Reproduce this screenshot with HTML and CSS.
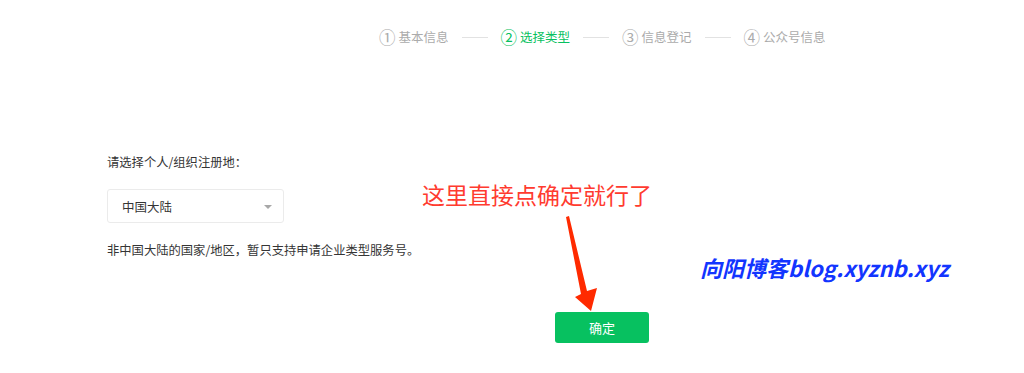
FILE: index.html
```html
<!DOCTYPE html>
<html lang="zh">
<head>
<meta charset="utf-8">
<link rel="stylesheet" href="styles.css">
</head>
<body>
<div class="page">
  <div class="steps">
    <div class="step"><span class="num">①</span><span>基本信息</span></div>
    <div class="line"></div>
    <div class="step active"><span class="num">②</span><span>选择类型</span></div>
    <div class="line"></div>
    <div class="step"><span class="num">③</span><span>信息登记</span></div>
    <div class="line"></div>
    <div class="step"><span class="num">④</span><span>公众号信息</span></div>
  </div>

  <div class="form">
    <div class="label">请选择个人/组织注册地：</div>
    <div class="select">
      <span>中国大陆</span>
      <span class="caret"></span>
    </div>
    <div class="note">非中国大陆的国家/地区，暂只支持申请企业类型服务号。</div>
  </div>

  <div class="actions">
    <button class="btn">确定</button>
  </div>

  <div class="anno-red">这里直接点确定就行了</div>
  <div class="anno-blue">向阳博客blog.xyznb.xyz</div>
  <svg class="arrow" width="1024" height="373" viewBox="0 0 1024 373">
    <polygon points="566,217 569,216 587,291 597,288 591,311 575,297 581,294" fill="#ff2a00"/>
  </svg>
</div>
</body>
</html>
```

FILE: styles.css
```css
* { box-sizing: border-box; }
html, body {
  margin: 0;
  padding: 0;
  background: #ffffff;
}
body {
  font-family: "Noto Sans CJK SC", "Noto Sans", sans-serif;
  color: #353535;
}
.page {
  position: relative;
  width: 1024px;
  height: 373px;
  overflow: hidden;
}
.steps {
  display: flex;
  align-items: center;
  gap: 13px;
  padding-top: 27px;
  padding-left: 379px;
  height: 47px;
  font-size: 12.5px;
  color: #ababab;
}
.step {
  display: flex;
  align-items: center;
  gap: 3px;
  line-height: 20px;
}
.step .num {
  font-size: 16.5px;
  line-height: 20px;
}
.step.active { color: #07c160; }
.line {
  width: 26px;
  height: 1px;
  background: #e2e2e2;
}
.form {
  padding-left: 107px;
  padding-top: 106px;
}
.label {
  font-size: 12.3px;
  line-height: 18px;
}
.select {
  margin-top: 18px;
  width: 177px;
  height: 34px;
  border: 1px solid #ebebeb;
  border-radius: 3px;
  display: flex;
  align-items: center;
  justify-content: space-between;
  padding: 0 11px 0 14px;
  font-size: 12.5px;
  color: #353535;
}
.caret {
  width: 0;
  height: 0;
  border-left: 4px solid transparent;
  border-right: 4px solid transparent;
  border-top: 4px solid #a8a8a8;
  margin-top: 1px;
}
.note {
  margin-top: 18px;
  font-size: 12.3px;
  line-height: 18px;
}
.actions {
  padding-left: 555px;
  padding-top: 53px;
}
.btn {
  width: 94px;
  height: 31px;
  border: 0;
  border-radius: 3px;
  background: #07c160;
  color: #ffffff;
  font-family: "Noto Sans CJK SC", sans-serif;
  font-size: 13px;
  padding: 0;
}
.anno-red {
  position: absolute;
  left: 422px;
  top: 178px;
  font-size: 23px;
  line-height: 32px;
  color: #ff3b2f;
}
.anno-blue {
  position: absolute;
  left: 700px;
  top: 252px;
  font-size: 22px;
  line-height: 30px;
  font-style: italic;
  font-weight: 700;
  color: #1235ff;
}
.arrow {
  position: absolute;
  left: 0;
  top: 0;
}
```
